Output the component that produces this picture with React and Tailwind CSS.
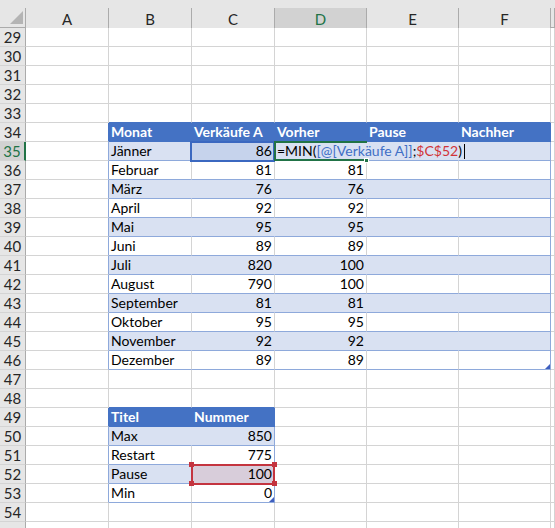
import React from "react";

// column definitions: letter + fixed width (incl. 1px right gridline)
const COLS = [
  { key: "A", w: "w-[83px]" },
  { key: "B", w: "w-[83px]" },
  { key: "C", w: "w-[83px]" },
  { key: "D", w: "w-[92px]" },
  { key: "E", w: "w-[92px]" },
  { key: "F", w: "w-[92px]" },
  { key: "G", w: "flex-1", hidden: true },
];

const ROWS = [];
for (let r = 29; r <= 55; r++) ROWS.push(r);

const sales = {
  35: ["Jänner", 86, null],
  36: ["Februar", 81, 81],
  37: ["März", 76, 76],
  38: ["April", 92, 92],
  39: ["Mai", 95, 95],
  40: ["Juni", 89, 89],
  41: ["Juli", 820, 100],
  42: ["August", 790, 100],
  43: ["September", 81, 81],
  44: ["Oktober", 95, 95],
  45: ["November", 92, 92],
  46: ["Dezember", 89, 89],
};

const limits = {
  50: ["Max", 850],
  51: ["Restart", 775],
  52: ["Pause", 100],
  53: ["Min", 0],
};

const T1 = { top: 34, bottom: 46, cols: ["B", "C", "D", "E", "F"] };
const T2 = { top: 49, bottom: 53, cols: ["B", "C"] };

function tableAt(r, c) {
  for (const t of [T1, T2]) {
    if (r >= t.top && r <= t.bottom && t.cols.includes(c)) return t;
  }
  return null;
}

function isBand(t, r) {
  return (r - t.top) % 2 === 1;
}

function ResizeHandle() {
  return (
    <svg className="absolute right-0 bottom-0 z-10" width="5" height="5" viewBox="0 0 5 5">
      <polygon points="5,0 5,5 0,5" fill="#3f5fbf" />
    </svg>
  );
}

function cellText(r, c) {
  if (r === 34) {
    return { B: "Monat", C: "Verkäufe A", D: "Vorher", E: "Pause", F: "Nachher" }[c];
  }
  if (r === 49) {
    return { B: "Titel", C: "Nummer" }[c];
  }
  if (sales[r]) {
    if (c === "B") return sales[r][0];
    if (c === "C") return sales[r][1];
    if (c === "D") return sales[r][2];
  }
  if (limits[r]) {
    if (c === "B") return limits[r][0];
    if (c === "C") return limits[r][1];
  }
  return null;
}

function Cell({ r, c, w }) {
  const t = tableAt(r, c);
  const header = t && r === t.top;
  const band = t && !header && isBand(t, r);
  const nextIn = c === "A" && tableAt(r, "B");
  const aboveHeader = tableAt(r + 1, c) && tableAt(r + 1, c).top === r + 1;
  const lastCol = t && t.cols[t.cols.length - 1] === c;

  let bg = "bg-white";
  if (header) bg = "bg-[#4472c4]";
  else if (band) bg = "bg-[#d9e1f2]";

  let right = "border-r-[#d4d4d4]";
  if (header) right = "border-r-[#4472c4]";
  else if (t && lastCol) right = "border-r-[#8ea9db]";
  else if (band) right = "border-r-[#d9e1f2]";
  else if (nextIn) right = nextIn.top === r ? "border-r-[#4472c4]" : "border-r-[#8ea9db]";

  let bottom = "border-b-[#d4d4d4]";
  if (header || aboveHeader) bottom = "border-b-[#4472c4]";
  else if (t) bottom = "border-b-[#8ea9db]";

  const value = cellText(r, c);
  const numeric = typeof value === "number";

  return (
    <div className={`relative shrink-0 h-[19px] border-r border-b ${w} ${bg} ${right} ${bottom}`}>
      {/* referenced cell C35 (blue) */}
      {r === 35 && c === "C" && (
        <div className="absolute -left-[2px] -top-[1px] w-[85px] h-[21px] border-2 border-[#3b68c0] bg-[#c6d3ec] z-10" />
      )}
      {/* referenced cell C52 (red) with handles */}
      {r === 52 && c === "C" && (
        <>
          <div className="absolute -left-[1px] -top-[1px] w-[84px] h-[21px] border-2 border-[#c4343f] bg-[#d8cdda] z-10" />
          <div className="absolute -left-[3px] -top-[3px] w-[5px] h-[5px] bg-[#c4343f] z-20" />
          <div className="absolute -right-[3px] -top-[3px] w-[5px] h-[5px] bg-[#c4343f] z-20" />
          <div className="absolute -left-[3px] -bottom-[3px] w-[5px] h-[5px] bg-[#c4343f] z-20" />
          <div className="absolute -right-[3px] -bottom-[3px] w-[5px] h-[5px] bg-[#c4343f] z-20" />
        </>
      )}
      {/* active cell D35 in edit mode */}
      {r === 35 && c === "D" && (
        <>
          <div className="absolute -left-[1px] -top-[1px] w-[93px] h-[20px] border-2 border-r-0 border-[#217346] z-20" />
          <div className="absolute -right-[3px] -bottom-[3px] w-[5px] h-[5px] bg-[#217346] border border-white z-30" />
          <div className="absolute left-[2px] top-0 h-[18px] flex items-end whitespace-nowrap text-[14px] leading-[18px] z-30">
            <span className="text-black">=MIN(</span>
            <span className="text-[#3f6fc6]">[@[Verkäufe A]]</span>
            <span className="text-black">;</span>
            <span className="text-[#d13438]">$C$52</span>
            <span className="text-black">)</span>
            <span className="ml-[2px] w-[1px] h-[15px] mb-[1px] bg-black" />
          </div>
        </>
      )}
      {value !== null && value !== undefined && (
        <div
          className={`relative z-20 h-[18px] flex items-end px-[2px] text-[14px] leading-[18px] whitespace-nowrap ${
            numeric ? "justify-end" : "justify-start"
          } ${header ? "font-bold text-white" : "text-black"}`}
        >
          {value}
        </div>
      )}
      {((r === 46 && c === "F") || (r === 53 && c === "C")) && <ResizeHandle />}
    </div>
  );
}

function ColumnHeader() {
  return (
    <div className="flex h-[28px] bg-[#e6e6e6] shrink-0">
      <div className="relative w-[26px] h-full shrink-0 flex flex-col">
        <div className="mt-2 flex-1 border-r border-b border-[#ababab]" />
        <svg className="absolute left-0 top-0" width="26" height="28" viewBox="0 0 26 28">
          <polygon points="10,24 23,24 23,11" fill="#b4b4b4" />
        </svg>
      </div>
      {COLS.map((col) => {
        const sel = col.key === "D";
        return (
          <div key={col.key} className={`h-full flex flex-col shrink-0 ${col.w}`}>
            <div
              className={`mt-2 flex-1 border-r border-r-[#ababab] flex items-center justify-center text-[15px] ${
                sel
                  ? "bg-[#d2d2d2] border-b-2 border-b-[#217346] text-[#217346]"
                  : "border-b border-b-[#ababab] text-[#262626]"
              }`}
            >
              {col.hidden ? null : col.key}
            </div>
          </div>
        );
      })}
    </div>
  );
}

function SheetRow({ r }) {
  const sel = r === 35;
  return (
    <div className="flex shrink-0">
      <div
        className={`w-[26px] h-[19px] shrink-0 border-b border-b-[#d4d4d4] flex items-end justify-center text-[15px] leading-[18px] ${
          sel
            ? "bg-[#d2d2d2] border-r-2 border-r-[#217346] text-[#217346]"
            : "bg-[#e6e6e6] border-r border-r-[#ababab] text-[#262626]"
        }`}
      >
        {r < 55 ? r : null}
      </div>
      {COLS.map((col) => (
        <Cell key={col.key} r={r} c={col.key} w={col.w} />
      ))}
    </div>
  );
}

export default function App() {
  return (
    <div className="w-[555px] h-[528px] overflow-hidden bg-white flex flex-col" style={{ fontFamily: "Lato, 'Liberation Sans', sans-serif" }}>
      <ColumnHeader />
      {ROWS.map((r) => (
        <SheetRow key={r} r={r} />
      ))}
    </div>
  );
}
